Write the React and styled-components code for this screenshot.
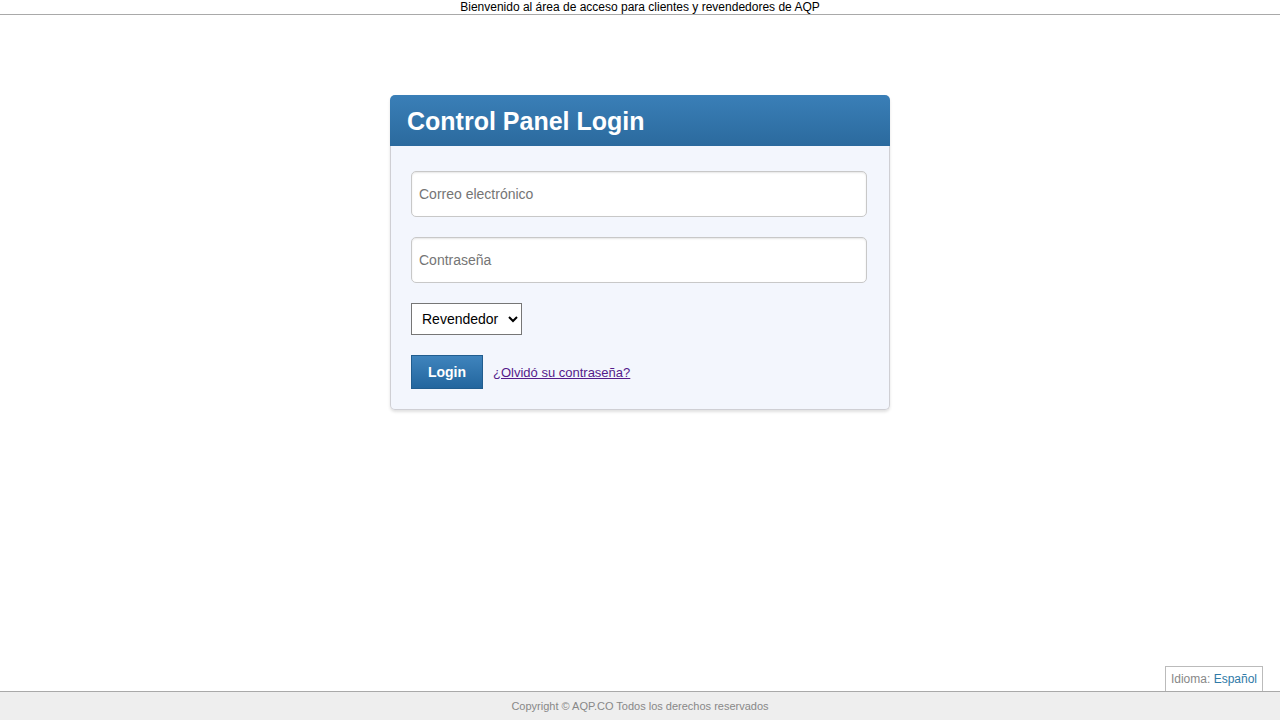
import React from 'react';
import styled, { createGlobalStyle } from 'styled-components';

const Global = createGlobalStyle`
  html, body {
    margin: 0;
    padding: 0;
    background: #fff;
    font-family: "Liberation Sans", Arial, sans-serif;
  }
  * { box-sizing: border-box; }
`

const Page = styled.div`
  min-height: 720px;
  display: flex;
  flex-direction: column;
`

const TopBar = styled.div`
  height: 15px;
  border-bottom: 1px solid #a9a9a9;
  text-align: center;
  font-size: 12px;
  line-height: 14px;
  color: #000;
`

const Main = styled.div`
  flex: 1;
  display: flex;
  justify-content: center;
  padding-top: 80px;
`

const Panel = styled.div`
  width: 500px;
  align-self: flex-start;
  border-radius: 5px;
  box-shadow: 0 2px 3px rgba(0,0,0,0.12);
`

const Header = styled.div`
  height: 51px;
  padding: 2px 17px 0;
  display: flex;
  align-items: center;
  background: linear-gradient(to bottom, #3a7fb7, #2b6a9e);
  border-radius: 5px 5px 0 0;
  h1 {
    margin: 0;
    color: #fff;
    font-size: 25px;
    font-weight: bold;
  }
`

const Body = styled.div`
  background: #f3f6fd;
  border: 1px solid #cfcfd4;
  border-top: none;
  border-radius: 0 0 5px 5px;
  padding: 25px 20px 20px;
  display: flex;
  flex-direction: column;
  gap: 20px;
`

const Input = styled.input`
  width: 456px;
  height: 46px;
  border: 1px solid #c8c8c8;
  border-radius: 5px;
  background: #fff;
  box-shadow: inset 0 1px 2px rgba(0,0,0,0.1);
  padding: 0 7px;
  font-family: "Liberation Sans", Arial, sans-serif;
  font-size: 14px;
  color: #333;
  outline: none;
  &::placeholder { color: #757575; }
`

const Select = styled.select`
  width: 111px;
  height: 32px;
  border: 1px solid #767676;
  border-radius: 0;
  background: #fff;
  font-family: "Liberation Sans", Arial, sans-serif;
  font-size: 14px;
  color: #000;
  padding: 0 4px 0 6px;
`

const Row = styled.div`
  display: flex;
  align-items: center;
  gap: 10px;
`

const Button = styled.button`
  width: 72px;
  height: 34px;
  border: 1px solid #215d8f;
  border-radius: 0;
  background: linear-gradient(to bottom, #3f84bd, #23669e);
  color: #fff;
  font-family: "Liberation Sans", Arial, sans-serif;
  font-size: 14px;
  font-weight: bold;
  cursor: pointer;
`

const Link = styled.a`
  color: #551a8b;
  font-size: 13px;
  text-decoration: underline;
`

const LangBox = styled.div`
  align-self: flex-end;
  margin-right: 17px;
  height: 25px;
  padding: 0 5px;
  border: 1px solid #bbb;
  border-bottom: none;
  background: #fff;
  font-size: 12px;
  line-height: 25px;
  color: #888;
  span { color: #2f7aa7; }
`

const Footer = styled.div`
  height: 29px;
  background: #eee;
  border-top: 1px solid #a9a9a9;
  text-align: center;
  font-size: 11px;
  line-height: 28px;
  color: #888;
`

export default function App() {
  return (
    <Page>
      <Global />
      <TopBar>Bienvenido al área de acceso para clientes y revendedores de AQP</TopBar>
      <Main>
        <Panel>
          <Header><h1>Control Panel Login</h1></Header>
          <Body>
            <Input type="text" placeholder="Correo electrónico" />
            <Input type="password" placeholder="Contraseña" />
            <div>
              <Select defaultValue="reseller">
                <option value="reseller">Revendedor</option>
                <option value="customer">Cliente</option>
              </Select>
            </div>
            <Row>
              <Button>Login</Button>
              <Link href="#">¿Olvidó su contraseña?</Link>
            </Row>
          </Body>
        </Panel>
      </Main>
      <LangBox>Idioma: <span>Español</span></LangBox>
      <Footer>Copyright © AQP.CO Todos los derechos reservados</Footer>
    </Page>
  )
}
